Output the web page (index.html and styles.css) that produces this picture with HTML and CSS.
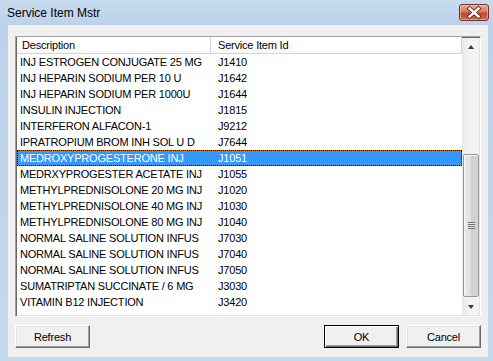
FILE: index.html
```html
<!DOCTYPE html>
<html lang="en">
<head>
  <meta charset="UTF-8" />
  <title>Service Item Mstr</title>
  <link rel="stylesheet" href="styles.css">
</head>
<body>
  <div class="window">
    <div class="titlebar">
      <span class="title">Service Item Mstr</span>
      <button class="close" aria-label="Close">
        <svg width="30" height="17" viewBox="0 0 30 17">
          <path d="M10.5 4.5 L19.5 12.5 M19.5 4.5 L10.5 12.5" stroke="#5a2a22" stroke-width="4.2" stroke-linecap="square"/>
          <path d="M10.5 4.5 L19.5 12.5 M19.5 4.5 L10.5 12.5" stroke="#fff" stroke-width="2.4" stroke-linecap="square"/>
        </svg>
      </button>
    </div>

    <div class="client">
      <div class="listbox">
        <div class="list-main">
          <div class="list-header">
            <div class="hcol col-desc">Description</div>
            <div class="hcol col-id">Service Item Id</div>
          </div>
          <div class="rows">
            <div class="row"><span class="col-desc">INJ ESTROGEN CONJUGATE 25 MG</span><span class="col-id">J1410</span></div>
            <div class="row"><span class="col-desc">INJ HEPARIN SODIUM PER 10 U</span><span class="col-id">J1642</span></div>
            <div class="row"><span class="col-desc">INJ HEPARIN SODIUM PER 1000U</span><span class="col-id">J1644</span></div>
            <div class="row"><span class="col-desc">INSULIN INJECTION</span><span class="col-id">J1815</span></div>
            <div class="row"><span class="col-desc">INTERFERON ALFACON-1</span><span class="col-id">J9212</span></div>
            <div class="row"><span class="col-desc">IPRATROPIUM BROM INH SOL U D</span><span class="col-id">J7644</span></div>
            <div class="row selected"><span class="col-desc">MEDROXYPROGESTERONE INJ</span><span class="col-id">J1051</span></div>
            <div class="row"><span class="col-desc">MEDRXYPROGESTER ACETATE INJ</span><span class="col-id">J1055</span></div>
            <div class="row"><span class="col-desc">METHYLPREDNISOLONE 20 MG INJ</span><span class="col-id">J1020</span></div>
            <div class="row"><span class="col-desc">METHYLPREDNISOLONE 40 MG INJ</span><span class="col-id">J1030</span></div>
            <div class="row"><span class="col-desc">METHYLPREDNISOLONE 80 MG INJ</span><span class="col-id">J1040</span></div>
            <div class="row"><span class="col-desc">NORMAL SALINE SOLUTION INFUS</span><span class="col-id">J7030</span></div>
            <div class="row"><span class="col-desc">NORMAL SALINE SOLUTION INFUS</span><span class="col-id">J7040</span></div>
            <div class="row"><span class="col-desc">NORMAL SALINE SOLUTION INFUS</span><span class="col-id">J7050</span></div>
            <div class="row"><span class="col-desc">SUMATRIPTAN SUCCINATE / 6 MG</span><span class="col-id">J3030</span></div>
            <div class="row"><span class="col-desc">VITAMIN B12 INJECTION</span><span class="col-id">J3420</span></div>
          </div>
        </div>
        <div class="scrollbar">
          <div class="sb-btn"><span class="arrow up"></span></div>
          <div class="sb-track">
            <div class="sb-thumb"><span class="grip"></span></div>
          </div>
          <div class="sb-btn"><span class="arrow down"></span></div>
        </div>
      </div>

      <div class="buttons">
        <button class="btn">Refresh</button>
        <div class="spacer"></div>
        <button class="btn default">OK</button>
        <button class="btn">Cancel</button>
      </div>
    </div>
  </div>
</body>
</html>
```

FILE: styles.css
```css
:root {
  --frame: #c2d6ec;
  --face: #f0f0f0;
  --select: #3399ff;
}

body {
  margin: 0;
  width: 493px;
  height: 361px;
  overflow: hidden;
  font-family: "Liberation Sans", Arial, sans-serif;
  background: var(--frame);
}

.window {
  width: 493px;
  height: 361px;
  display: flex;
  flex-direction: column;
  background: linear-gradient(180deg, #c8dbef 0%, #bcd2ea 25px, #c4d8ee 100%);
  border-radius: 6px 0 0 0;
  box-sizing: border-box;
  padding: 0 5px 4px 8px;
}

/* title bar */
.titlebar {
  height: 25px;
  display: flex;
  align-items: flex-start;
  margin-left: -8px;
  margin-right: -5px;
}

.title {
  font-size: 12px;
  color: #000;
  margin: 6px 0 0 7px;
  flex: 1;
}

.close {
  width: 30px;
  height: 17px;
  margin: 4px 4px 0 0;
  padding: 0;
  border: 1px solid #7a2d22;
  border-radius: 3px;
  background: linear-gradient(180deg, #e9a894 0%, #d67a62 45%, #c2452c 55%, #cf6a4c 100%);
  box-shadow: inset 0 0 0 1px rgba(255, 220, 200, 0.5);
  display: flex;
  align-items: center;
  justify-content: center;
  box-sizing: border-box;
}

.close svg {
  display: block;
  flex: none;
}

/* client area */
.client {
  flex: 1;
  background: var(--face);
  padding: 11px 7px 9px 7px;
  display: flex;
  flex-direction: column;
  font-size: 11px;
  letter-spacing: -0.2px;
}

.listbox {
  height: 281px;
  box-sizing: border-box;
  border: 1px solid;
  border-color: #a0a0a0 #fff #fff #a0a0a0;
  box-shadow: inset 1px 1px 0 #696969, inset -1px -1px 0 #e3e3e3;
  background: #fff;
  display: flex;
  padding: 0 1px 1px 1px;
}

.list-main {
  flex: 1;
  overflow: hidden;
}

.list-header {
  display: flex;
  height: 16px;
  line-height: 16px;
  border-bottom: 1px solid #d5d5d5;
  background: linear-gradient(180deg, #fff 0%, #fff 60%, #f7f8fa 100%);
  color: #000;
}

.hcol {
  box-sizing: border-box;
  border-right: 1px solid #d5d5d5;
}

.list-header .col-desc {
  width: 194px;
  padding-left: 5px;
}

.list-header .col-id {
  flex: 1;
  padding-left: 7px;
}

.row {
  display: flex;
  height: 16px;
  line-height: 16px;
  color: #000;
  white-space: nowrap;
  position: relative;
}

.row .col-desc {
  width: 194px;
  padding-left: 3px;
  box-sizing: border-box;
}

.row .col-id {
  padding-left: 7px;
}

.row.selected {
  background: var(--select);
  color: #fff;
  box-shadow: inset 0 0 0 1px #c86a00;
}

.row.selected::after {
  content: "";
  position: absolute;
  inset: 0;
  border: 1px dotted #000;
}

/* scrollbar */
.scrollbar {
  width: 17px;
  margin-top: 1px;
  display: flex;
  flex-direction: column;
  background: linear-gradient(90deg, #e8e8e8 0%, #f3f3f3 40%, #f3f3f3 100%);
}

.sb-btn {
  height: 17px;
  display: flex;
  align-items: center;
  justify-content: center;
}

.arrow {
  width: 0;
  height: 0;
  border-left: 3.5px solid transparent;
  border-right: 3.5px solid transparent;
}

.arrow.up {
  border-bottom: 4px solid #3c3c3c;
}

.arrow.down {
  border-top: 4px solid #3c3c3c;
}

.sb-track {
  flex: 1;
  display: flex;
  flex-direction: column;
  justify-content: flex-end;
  padding: 0 0 1px 1px;
}

.sb-thumb {
  height: 143px;
  box-sizing: border-box;
  border: 1px solid #979797;
  border-radius: 2px;
  background: linear-gradient(90deg, #eaeaea 0%, #e0e0e0 45%, #cfcfcf 55%, #d4d4d4 100%);
  box-shadow: inset 1px 1px 0 #f8f8f8;
  display: flex;
  align-items: center;
  justify-content: center;
}

.grip {
  width: 7px;
  height: 7px;
  background: repeating-linear-gradient(180deg, #707070 0 1px, #e8e8e8 1px 2px);
}

/* buttons */
.buttons {
  display: flex;
  gap: 7px;
  margin-top: 8px;
}

.spacer {
  flex: 1;
}

.btn {
  width: 75px;
  height: 23px;
  padding: 0;
  font-family: "Liberation Sans", Arial, sans-serif;
  font-size: 11px;
  letter-spacing: -0.2px;
  color: #000;
  background: var(--face);
  border: 1px solid;
  border-color: #fff #696969 #696969 #fff;
  box-shadow: inset -1px -1px 0 #a0a0a0, inset 1px 1px 0 #e3e3e3;
}

.btn.default {
  border: 1px solid #000;
  box-shadow: inset 1px 1px 0 #fff, inset -1px -1px 0 #696969, inset -2px -2px 0 #a0a0a0;
}
```
